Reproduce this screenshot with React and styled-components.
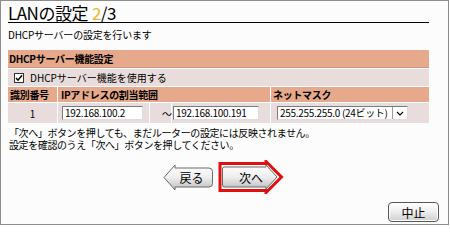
import styled, { createGlobalStyle } from "styled-components";

const GlobalStyle = createGlobalStyle`
  html, body { margin:0; padding:0; background:#fff; }
  body { font-family:"Noto Sans CJK JP","Noto Sans",sans-serif; color:#000; }
`;

const Frame = styled.div`
  width:449px; height:225px; box-sizing:border-box;
  border:1px solid #8c8c8c; background:#fcfcfc;
  padding:0 19px 0 7px; display:flex; flex-direction:column;
`;
const Title = styled.h1`
  margin:0; height:22px; box-sizing:border-box; border-bottom:1px solid #000;
  font-size:17px; font-weight:normal; line-height:17px; letter-spacing:-0.5px;
  display:flex; align-items:flex-end; padding-bottom:1px;
`;
const Step = styled.span`color:#e9b52c; margin-left:4px;`;
const Sub = styled.p`margin:6px 0 0; font-size:10px; line-height:12px; letter-spacing:-0.2px;`;

const Table = styled.div`
  margin-top:9px; display:grid; gap:1px; background:#fff;
  grid-template-columns:49px 91px 21px 98px 1fr;
  font-size:10px;
`;
const Bar = styled.div`
  grid-column:1 / -1; height:18px; background:#e6a98b;
  border-bottom:1px solid #d6967a; box-sizing:border-box;
  display:flex; align-items:center; padding-left:1px;
  font-weight:bold; letter-spacing:-0.3px;
`;
const CheckRow = styled.div`
  grid-column:1 / -1; height:17px; background:#e8dddc;
  display:flex; align-items:center; gap:6px; padding-left:6px;
`;
const Box = styled.span`
  width:8px; height:8px; border:1px solid #333; background:#fff;
  display:inline-flex; align-items:center; justify-content:center;
`;
const Head = styled.div`
  grid-column:${p => p.$span || "auto"}; height:15px; background:#e6a98b;
  display:flex; align-items:center; padding-left:${p => p.$pad || 2}px;
  font-weight:bold; letter-spacing:-0.3px;
`;
const Cell = styled.div`
  height:20px; background:#e8dddc; display:flex; align-items:center;
  justify-content:${p => p.$center ? "center" : "flex-start"};
  padding-left:${p => p.$pad || 0}px; box-sizing:border-box;
`;
const Field = styled.div`
  width:${p => p.$w}px; height:14px; box-sizing:border-box; background:#fff;
  border:1px solid #7a7a7a; border-right-color:#ddd; border-bottom-color:#ddd;
  font-size:10px; line-height:12px; padding-left:2px; letter-spacing:-0.3px;
  display:flex; align-items:center; justify-content:space-between;
`;
const Arrow = styled.span`
  width:14px; height:12px; border-left:1px solid #9a9a9a; background:#fff;
  display:flex; align-items:center; justify-content:center;
`;

const Note = styled.p`margin:4px 0 0 1px; font-size:10px; line-height:12px; letter-spacing:-0.4px;`;

const NavRow = styled.div`
  margin-top:9px; display:flex; align-items:center; padding-left:155px; gap:4px;
`;
const ShapeBtn = styled.button`
  position:relative; width:${p => p.$w}px; height:${p => p.$h}px;
  border:0; padding:0 0 0 ${p => p.$off}px; background:none; cursor:pointer;
  font-family:inherit; font-size:12px; color:#000;
  display:flex; align-items:center; justify-content:center;
  svg { position:absolute; left:0; top:0; }
  span { position:relative; }
`;
const Foot = styled.div`
  margin-top:8px; display:flex; justify-content:flex-end;
`;
const Cancel = styled.button`
  width:51px; height:20px; margin-right:-10px; border:1px solid #555; border-radius:4px;
  background:linear-gradient(#ffffff 0%, #f0f0f0 45%, #cfcfcf 100%);
  box-shadow:inset 0 0 0 1px #fff;
  font-family:inherit; font-size:12px; padding:0;
`;

function Grad({ id }) {
  return (
    <defs>
      <linearGradient id={id} x1="0" y1="0" x2="0" y2="1">
        <stop offset="0" stopColor="#ffffff" />
        <stop offset="0.5" stopColor="#eeeeee" />
        <stop offset="1" stopColor="#bdbdbd" />
      </linearGradient>
    </defs>
  );
}

export default function App() {
  return (
    <>
      <GlobalStyle />
      <Frame>
        <Title>LANの設定<Step>2</Step>/3</Title>
        <Sub>DHCPサーバーの設定を行います</Sub>

        <Table>
          <Bar>DHCPサーバー機能設定</Bar>
          <CheckRow>
            <Box>
              <svg width="8" height="8" viewBox="0 0 8 8">
                <path d="M1 4 L3 6.2 L7 1.2" fill="none" stroke="#000" strokeWidth="1.5" />
              </svg>
            </Box>
            DHCPサーバー機能を使用する
          </CheckRow>
          <Head>識別番号</Head>
          <Head $span="2 / 5" $pad={3}>IPアドレスの割当範囲</Head>
          <Head>ネットマスク</Head>
          <Cell $center>1</Cell>
          <Cell $pad={4}><Field $w={81}>192.168.100.2</Field></Cell>
          <Cell $pad={12}>～</Cell>
          <Cell $pad={1}><Field $w={86}>192.168.100.191</Field></Cell>
          <Cell $pad={6}>
            <Field $w={131}>
              255.255.255.0 (24ビット)
              <Arrow>
                <svg width="8" height="5" viewBox="0 0 8 5">
                  <path d="M1 1 L4 4 L7 1" fill="none" stroke="#000" strokeWidth="1.2" />
                </svg>
              </Arrow>
            </Field>
          </Cell>
        </Table>

        <Note>
          「次へ」ボタンを押しても、まだルーターの設定には反映されません。<br />
          設定を確認のうえ「次へ」ボタンを押してください。
        </Note>

        <NavRow>
          <ShapeBtn $w={51} $h={27} $off={6}>
            <svg width="51" height="27" viewBox="0 0 51 27">
              <Grad id="gb" />
              <path d="M1 13.5 L12 1 L12 4 L46 4 Q49.5 4 49.5 7.5 L49.5 19.5 Q49.5 23 46 23 L12 23 L12 26 Z"
                fill="url(#gb)" stroke="#6a6a6a" strokeWidth="1" />
            </svg>
            <span>戻る</span>
          </ShapeBtn>
          <ShapeBtn $w={66} $h={34} $off={0}>
            <svg width="66" height="34" viewBox="0 0 66 34">
              <Grad id="gn" />
              <path d="M2 3.5 L48 3.5 L48 1.5 L63.5 17 L48 32.5 L48 30.5 L2 30.5 Z"
                fill="none" stroke="#e01010" strokeWidth="3" strokeLinejoin="miter" />
              <path d="M6 7 L48 7 L48 5 L59 17 L48 29 L48 27 L6 27 Q4.5 27 4.5 25 L4.5 9 Q4.5 7 6 7 Z"
                fill="url(#gn)" stroke="#6a6a6a" strokeWidth="1" />
            </svg>
            <span>次へ</span>
          </ShapeBtn>
        </NavRow>

        <Foot>
          <Cancel>中止</Cancel>
        </Foot>
      </Frame>
    </>
  );
}
